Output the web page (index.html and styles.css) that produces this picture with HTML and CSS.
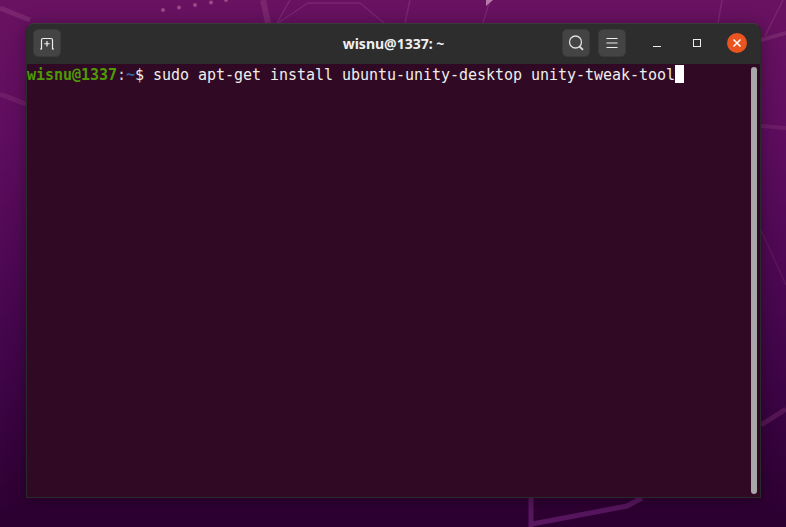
FILE: index.html
```html
<!DOCTYPE html>
<html lang="en">
<head>
<meta charset="utf-8">
<title>wisnu@1337: ~</title>
<link rel="stylesheet" href="styles.css">
</head>
<body>
<svg class="wallpaper" width="786" height="527" viewBox="0 0 786 527" aria-hidden="true">
  <g fill="#a8608f" opacity=".75">
    <circle cx="163" cy="10" r="2"/><circle cx="179" cy="7.5" r="2"/><circle cx="195" cy="5" r="2"/><circle cx="211" cy="2.500" r="2"/><circle cx="226" cy="0" r="2"/>
  </g>
  <g fill="none" stroke="#8a3a7c" stroke-opacity=".5">
    <path d="M0 8L30 20" stroke-width="5"/>
    <path d="M0 94L26 104" stroke-width="5" opacity=".7"/>
    <path d="M263 0L268 23" stroke-width="6"/>
    <path d="M290 0L277 23M278 23L308 3H360L384 23M410 0L405 23M490 0L483 23M722 0L718 23" stroke-width="1.500"/>
    <path d="M783 0L765 36" stroke-width="1.500"/>
    <path d="M761 40L786 33" stroke-width="4"/>
    <path d="M761 126L786 128" stroke-width="4" opacity=".7"/>
    <path d="M761 230L786 285" stroke-width="1.500" opacity=".5"/>
    <path d="M761 425L786 409" stroke-width="5" opacity=".7"/>
    <path d="M531 498V527M532 524L627 506L642 498" stroke="#6a1f72" stroke-opacity=".7" stroke-width="5"/>
  </g>
  <path d="M486 0H493L486 6Z" fill="#b87aa8"/>
</svg>

<main class="window">
  <header class="titlebar">
    <div class="bar-side">
      <button class="tool-btn" type="button" aria-label="New tab">
        <svg width="16" height="16" viewBox="0 0 16 16"><path d="M1 14H2.500V5Q2.500 3.500 4 3.500H12Q13.500 3.500 13.500 5V14H15" fill="none" stroke="#eee" stroke-width="1.200"/><path d="M8 6V11.500M5.250 8.750H10.750" fill="none" stroke="#eee" stroke-width="1.200"/></svg>
      </button>
    </div>
    <h1 class="title">wisnu@1337: ~</h1>
    <div class="bar-side bar-right">
      <button class="tool-btn" type="button" aria-label="Search">
        <svg width="16" height="16" viewBox="0 0 16 16"><circle cx="7.500" cy="7" r="6" fill="none" stroke="#ddd" stroke-width="1.300"/><path d="M11.500 11.500L15 14.800" fill="none" stroke="#ddd" stroke-width="1.800"/></svg>
      </button>
      <button class="tool-btn" type="button" aria-label="Menu">
        <svg width="16" height="16" viewBox="0 0 16 16"><path d="M2.500 3.500H13.500M2.500 8H13.500M2.500 12.500H13.500" fill="none" stroke="#eee" stroke-width="1.100"/></svg>
      </button>
      <div class="win-controls">
        <span class="win-ctl"><svg width="8" height="8" viewBox="0 0 8 8"><path d="M0 7.500H8" stroke="#eee"/></svg></span>
        <span class="win-ctl"><svg width="8" height="8" viewBox="0 0 8 8"><rect x=".5" y=".5" width="7" height="7" fill="none" stroke="#eee"/></svg></span>
        <span class="win-close"><svg width="10" height="10" viewBox="0 0 10 10"><path d="M1.500 1.500L8.500 8.500M8.500 1.500L1.500 8.500" stroke="#fff" stroke-width="1.500"/></svg></span>
      </div>
    </div>
  </header>
  <section class="terminal">
    <div class="line"><b class="user">wisnu@1337</b><span class="colon">:</span><b class="path">~</b><span>$ sudo apt-get install ubuntu-unity-desktop unity-tweak-tool</span><span class="cursor"></span></div>
    <div class="scrollbar"></div>
  </section>
</main>
</body>
</html>
```

FILE: styles.css
```css
* { box-sizing: border-box; }

html, body { height: 100%; }

body {
  margin: 0;
  padding: 23px 25px 29px 26px;
  overflow: hidden;
  position: relative;
  display: flex;
  background: linear-gradient(180deg, #6a1262 0%, #5f0d5f 25%, #4e0854 50%, #3c0444 75%, #2c0030 100%);
}

.wallpaper {
  position: absolute;
  left: 0;
  top: 0;
}

.window {
  position: relative;
  flex: 1;
  display: flex;
  flex-direction: column;
  border: 1px solid #2a2a2a;
  border-top-color: #3a3a3a;
  border-radius: 8px 8px 0 0;
  box-shadow: 0 2px 18px rgba(0, 0, 0, .35);
  overflow: hidden;
}

.titlebar {
  height: 40px;
  flex: none;
  display: grid;
  grid-template-columns: 1fr auto 1fr;
  align-items: center;
  background: #2d2d2d;
  padding: 0 6px 2px;
}

.bar-side { display: flex; align-items: center; }

.bar-right { justify-content: flex-end; gap: 8px; }

.title {
  margin: 0;
  font: 700 14px "Noto Sans", sans-serif;
  color: #f0f0f0;
}

.tool-btn {
  width: 28px;
  height: 28px;
  padding: 0;
  display: flex;
  align-items: center;
  justify-content: center;
  background: #444;
  border: 1px solid #3a3a3a;
  border-radius: 5px;
}

.win-controls {
  display: flex;
  align-items: center;
  gap: 20px;
  margin: 0 7px 0 13px;
}

.win-ctl {
  width: 20px;
  height: 20px;
  display: flex;
  align-items: center;
  justify-content: center;
}

.win-close {
  width: 20px;
  height: 20px;
  display: flex;
  align-items: center;
  justify-content: center;
  border-radius: 50%;
  background: #e95420;
}

.terminal {
  position: relative;
  flex: 1;
  background: #300a24;
  color: #eeeeec;
  font: 15px/20px "DejaVu Sans Mono", monospace;
  letter-spacing: -.03px;
}

.line {
  display: flex;
  white-space: pre;
  padding-top: 1px;
}

.user { color: #4e9a06; }

.colon { color: #d3d7cf; }

.path { color: #3465a4; }

.cursor {
  align-self: flex-start;
  width: 9px;
  height: 18px;
  background: #fff;
}

.scrollbar {
  position: absolute;
  top: 3px;
  right: 3px;
  bottom: 3px;
  width: 6px;
  border-radius: 3px;
  background: #aaa7aa;
}
```
